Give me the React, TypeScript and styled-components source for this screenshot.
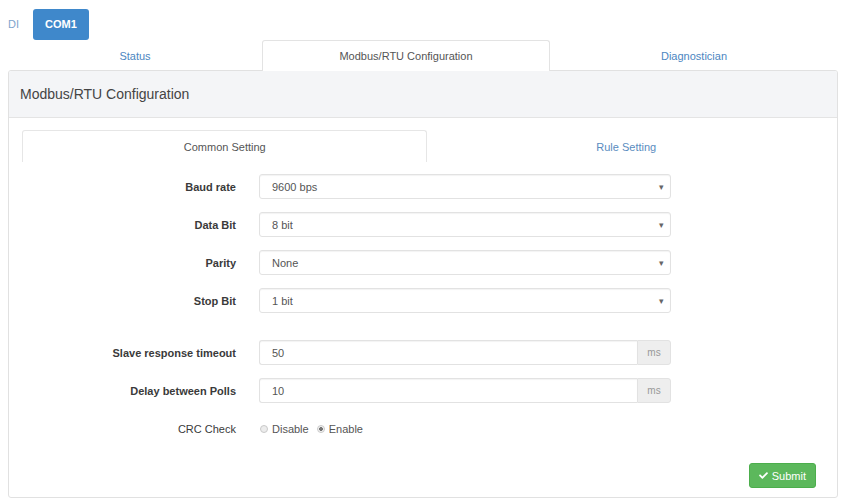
import React, { useState } from 'react';
import styled, { createGlobalStyle } from 'styled-components';
import { FaCheck } from 'react-icons/fa';

const GlobalStyle = createGlobalStyle`
  html, body {
    margin: 0;
    padding: 0;
    background: #fff;
  }
  body {
    font-family: 'Liberation Sans', Arial, sans-serif;
    font-size: 11px;
    color: #333;
  }
  * {
    box-sizing: border-box;
  }
`;

const portList = ['DI', 'COM1'];
const mainTabs = ['Status', 'Modbus/RTU Configuration', 'Diagnostician'];
const subTabs = ['Common Setting', 'Rule Setting'];

const selectFields = [
  { label: 'Baud rate', value: '9600 bps' },
  { label: 'Data Bit', value: '8 bit' },
  { label: 'Parity', value: 'None' },
  { label: 'Stop Bit', value: '1 bit' },
];

const timingFields = [
  { label: 'Slave response timeout', value: '50', unit: 'ms' },
  { label: 'Delay between Polls', value: '10', unit: 'ms' },
];

export default function App() {
  const [port, setPort] = useState<number>(1);
  const [mainTab, setMainTab] = useState<number>(1);
  const [subTab, setSubTab] = useState<number>(0);
  const [crc, setCrc] = useState<'disable' | 'enable'>('enable');

  return (
    <>
      <GlobalStyle />
      <Page>
        <PortBar>
          {portList.map((p, index) => (
            <PortButton key={p} active={port === index} onClick={() => setPort(index)}>
              {p}
            </PortButton>
          ))}
        </PortBar>

        <MainTabs>
          {mainTabs.map((tab, index) => (
            <MainTab key={tab} active={mainTab === index} onClick={() => setMainTab(index)}>
              {tab}
            </MainTab>
          ))}
        </MainTabs>

        <Panel>
          <PanelHeading>Modbus/RTU Configuration</PanelHeading>
          <PanelBody>
            <SubTabs>
              {subTabs.map((tab, index) => (
                <SubTab key={tab} active={subTab === index} onClick={() => setSubTab(index)}>
                  {tab}
                </SubTab>
              ))}
            </SubTabs>

            <Form>
              {selectFields.map((f) => (
                <Row key={f.label}>
                  <Label>{f.label}</Label>
                  <Select>
                    <span>{f.value}</span>
                    <Caret>▾</Caret>
                  </Select>
                </Row>
              ))}

              <Spacer />

              {timingFields.map((f) => (
                <Row key={f.label}>
                  <Label>{f.label}</Label>
                  <InputGroup>
                    <Input type='text' defaultValue={f.value} />
                    <Addon>{f.unit}</Addon>
                  </InputGroup>
                </Row>
              ))}

              <Row>
                <Label plain>CRC Check</Label>
                <Radios>
                  <RadioOption onClick={() => setCrc('disable')}>
                    <RadioDot checked={crc === 'disable'} />
                    Disable
                  </RadioOption>
                  <RadioOption onClick={() => setCrc('enable')}>
                    <RadioDot checked={crc === 'enable'} />
                    Enable
                  </RadioOption>
                </Radios>
              </Row>
            </Form>

            <Footer>
              <SubmitButton>
                <FaCheck size={9} />
                Submit
              </SubmitButton>
            </Footer>
          </PanelBody>
        </Panel>
      </Page>
    </>
  );
}

const Page = styled.div`
  width: 842px;
  height: 498px;
  padding: 8px 4px 0 8px;
  overflow: hidden;
`;

const PortBar = styled.div`
  display: flex;
  align-items: center;
  gap: 14px;
  height: 32px;
`;

const PortButton = styled.button<{ active: boolean }>`
  height: 31px;
  padding: 0 ${({ active }) => (active ? '12px' : '0')};
  border: none;
  border-radius: 3px;
  font-family: inherit;
  font-size: 11px;
  font-weight: ${({ active }) => (active ? 600 : 400)};
  color: ${({ active }) => (active ? '#fff' : '#7ea3cc')};
  background: ${({ active }) => (active ? '#3f88cb' : 'transparent')};
  cursor: pointer;
`;

const MainTabs = styled.ul`
  display: grid;
  grid-template-columns: 254fr 288fr 288fr;
  margin: 0;
  padding: 0;
  list-style: none;
  height: 30px;
`;

const MainTab = styled.li<{ active: boolean }>`
  display: flex;
  align-items: center;
  justify-content: center;
  height: ${({ active }) => (active ? '31px' : '30px')};
  color: ${({ active }) => (active ? '#555' : '#4c86c1')};
  background: #fff;
  border: 1px solid ${({ active }) => (active ? '#e3e3e3' : 'transparent')};
  border-bottom: none;
  border-radius: 3px 3px 0 0;
  position: relative;
  z-index: 1;
  cursor: pointer;
`;

const Panel = styled.section`
  height: 428px;
  border: 1px solid #e1e1e1;
  border-radius: 3px;
  background: #fff;
  overflow: hidden;
`;

const PanelHeading = styled.div`
  display: flex;
  align-items: center;
  height: 47px;
  padding: 0 11px;
  font-size: 14px;
  color: #444;
  background: #f4f5f7;
  border-bottom: 1px solid #e4e4e4;
`;

const PanelBody = styled.div`
  padding: 12px 12px 0 13px;
`;

const SubTabs = styled.ul`
  display: grid;
  grid-template-columns: 406fr 398fr;
  margin: 0;
  padding: 0;
  list-style: none;
  height: 32px;
  border-bottom: 1px solid #ddd;
`;

const SubTab = styled.li<{ active: boolean }>`
  display: flex;
  align-items: center;
  justify-content: center;
  height: 32px;
  color: ${({ active }) => (active ? '#555' : '#5a8cc0')};
  background: #fff;
  border: 1px solid ${({ active }) => (active ? '#e6e6e6' : 'transparent')};
  border-bottom: none;
  border-radius: 3px 3px 0 0;
  cursor: pointer;
`;

const Form = styled.div`
  display: flex;
  flex-direction: column;
  gap: 13px;
  padding-top: 12px;
`;

const Spacer = styled.div`
  height: 1px;
`;

const Row = styled.div`
  display: grid;
  grid-template-columns: 214px 412px;
  column-gap: 23px;
  align-items: center;
  height: 25px;
`;

const Label = styled.label<{ plain?: boolean }>`
  text-align: right;
  font-weight: ${({ plain }) => (plain ? 400 : 700)};
  color: #3a3a3a;
`;

const Select = styled.div`
  display: flex;
  align-items: center;
  justify-content: space-between;
  height: 25px;
  padding: 0 6px 0 12px;
  color: #555;
  border: 1px solid #e2e2e2;
  border-radius: 3px;
  box-shadow: inset 0 1px 1px rgba(0, 0, 0, 0.05);
  background: #fff;
`;

const Caret = styled.span`
  font-size: 9px;
  color: #666;
`;

const InputGroup = styled.div`
  display: flex;
  height: 25px;
`;

const Input = styled.input`
  flex: 1;
  min-width: 0;
  height: 25px;
  padding: 0 12px;
  font-family: inherit;
  font-size: 11px;
  color: #555;
  border: 1px solid #e2e2e2;
  border-right: none;
  border-radius: 3px 0 0 3px;
  box-shadow: inset 0 1px 1px rgba(0, 0, 0, 0.05);
  outline: none;
`;

const Addon = styled.span`
  display: flex;
  align-items: center;
  justify-content: center;
  width: 34px;
  font-size: 10px;
  color: #999;
  background: #eee;
  border: 1px solid #e2e2e2;
  border-radius: 0 3px 3px 0;
`;

const Radios = styled.div`
  display: flex;
  align-items: center;
  gap: 8px;
  padding-left: 1px;
`;

const RadioOption = styled.label`
  display: flex;
  align-items: center;
  gap: 4px;
  color: #555;
  cursor: pointer;
`;

const RadioDot = styled.span<{ checked: boolean }>`
  display: inline-block;
  width: 8px;
  height: 8px;
  border-radius: 50%;
  border: 1px solid #c9c9c9;
  background: ${({ checked }) =>
    checked ? 'radial-gradient(circle, #777 0 1.6px, #f4f4f4 2.2px)' : '#ececec'};
`;

const Footer = styled.div`
  display: flex;
  justify-content: flex-end;
  padding: 22px 9px 0 0;
`;

const SubmitButton = styled.button`
  display: flex;
  align-items: center;
  gap: 4px;
  height: 25px;
  padding: 0 9px;
  font-family: inherit;
  font-size: 11px;
  color: #fff;
  background: #5cb85c;
  border: 1px solid #4cae4c;
  border-radius: 3px;
  cursor: pointer;
`;
